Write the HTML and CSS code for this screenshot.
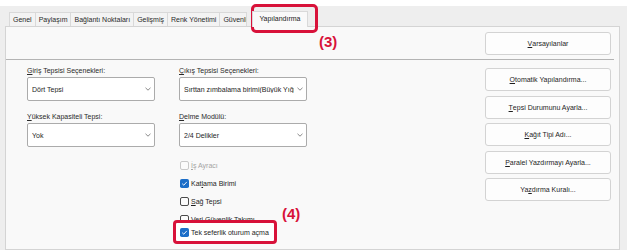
FILE: index.html
```html
<!DOCTYPE html>
<html lang="tr">
<head>
<meta charset="utf-8">
<title>Yapılandırma</title>
<link rel="stylesheet" href="styles.css">
</head>
<body>
<div class="dialog">
  <div class="tabs">
    <div class="tab">Genel</div>
    <div class="tab">Paylaşım</div>
    <div class="tab">Bağlantı Noktaları</div>
    <div class="tab">Gelişmiş</div>
    <div class="tab">Renk Yönetimi</div>
    <div class="tab tab-clipped">Güvenlik</div>
    <div class="tab tab-active">Yapılandırma</div>
  </div>
  <div class="panel">
    <div class="panel-top">
      <div class="btn"><span class="ak">V</span>arsayılanlar</div>
    </div>
    <div class="panel-body">
      <div class="col">
        <div class="field-label"><span class="ak">G</span>iriş Tepsisi Seçenekleri:</div>
        <div class="select"><span class="select-text">Dört Tepsi</span><svg class="chev" width="6" height="4" viewBox="0 0 6 4"><polyline points="0.5,0.8 3,3.2 5.5,0.8" fill="none" stroke="#6b6b6b" stroke-width="0.8"/></svg></div>
        <div class="field-label field-label-gap"><span class="ak">Y</span>üksek Kapasiteli Tepsi:</div>
        <div class="select"><span class="select-text">Yok</span><svg class="chev" width="6" height="4" viewBox="0 0 6 4"><polyline points="0.5,0.8 3,3.2 5.5,0.8" fill="none" stroke="#6b6b6b" stroke-width="0.8"/></svg></div>
      </div>
      <div class="col">
        <div class="field-label"><span class="ak">Ç</span>ıkış Tepsisi Seçenekleri:</div>
        <div class="select"><span class="select-text">Sırttan zımbalama birimi(Büyük Yığı</span><svg class="chev" width="6" height="4" viewBox="0 0 6 4"><polyline points="0.5,0.8 3,3.2 5.5,0.8" fill="none" stroke="#6b6b6b" stroke-width="0.8"/></svg></div>
        <div class="field-label field-label-gap"><span class="ak">D</span>elme Modülü:</div>
        <div class="select"><span class="select-text">2/4 Delikler</span><svg class="chev" width="6" height="4" viewBox="0 0 6 4"><polyline points="0.5,0.8 3,3.2 5.5,0.8" fill="none" stroke="#6b6b6b" stroke-width="0.8"/></svg></div>
        <div class="checks">
          <div class="check check-disabled">
            <svg class="cb" width="9" height="9" viewBox="0 0 9 9"><rect x="0.5" y="0.5" width="8" height="8" rx="1.5" fill="#fbfbfb" stroke="#c9c9c9"/></svg>
            <span><span class="ak">İ</span>ş Ayracı</span>
          </div>
          <div class="check">
            <svg class="cb" width="9" height="9" viewBox="0 0 9 9"><rect x="0" y="0" width="9" height="9" rx="1.8" fill="#1c6ec8"/><polyline points="2.2,4.7 3.8,6.2 6.8,2.9" fill="none" stroke="#ffffff" stroke-width="0.9"/></svg>
            <span>Kat<span class="ak">l</span>ama Birimi</span>
          </div>
          <div class="check">
            <svg class="cb" width="9" height="9" viewBox="0 0 9 9"><rect x="0.5" y="0.5" width="8" height="8" rx="1.5" fill="#fbfbfb" stroke="#4a4a4a"/></svg>
            <span><span class="ak">S</span>ağ Tepsi</span>
          </div>
          <div class="check">
            <svg class="cb" width="9" height="9" viewBox="0 0 9 9"><rect x="0.5" y="0.5" width="8" height="8" rx="1.5" fill="#fbfbfb" stroke="#4a4a4a"/></svg>
            <span>Veri Güvenlik Takımı</span>
          </div>
          <div class="check check-highlight">
            <svg class="cb" width="9" height="9" viewBox="0 0 9 9"><rect x="0" y="0" width="9" height="9" rx="1.8" fill="#1c6ec8"/><polyline points="2.2,4.7 3.8,6.2 6.8,2.9" fill="none" stroke="#ffffff" stroke-width="0.9"/></svg>
            <span>Tek seferlik oturum açma</span>
          </div>
        </div>
      </div>
      <div class="col col-buttons">
        <div class="btn"><span class="ak">O</span>tomatik Yapılandırma...</div>
        <div class="btn"><span class="ak">T</span>epsi Durumunu Ayarla...</div>
        <div class="btn"><span class="ak">K</span>ağıt Tipi Adı...</div>
        <div class="btn"><span class="ak">P</span>aralel Yazdırmayı Ayarla...</div>
        <div class="btn">Ya<span class="ak">z</span>dırma Kuralı...</div>
      </div>
    </div>
  </div>
</div>
<div class="mark-tab"></div>
<div class="note note-3">(3)</div>
<div class="note note-4">(4)</div>
</body>
</html>
```

FILE: styles.css
```css
* { box-sizing: border-box; }

html, body {
  margin: 0;
  padding: 0;
}

body {
  position: relative;
  width: 627px;
  height: 250px;
  overflow: hidden;
  background: #ffffff;
  font-family: "Liberation Sans", Arial, sans-serif;
  font-size: 7px;
  color: #1e1e1e;
}

.ak { text-decoration: underline; }

.dialog {
  margin-top: 6px;
  height: 244px;
  background: #eeeeee;
  padding: 0 7px 0 5px;
  display: flex;
  flex-direction: column;
  overflow: hidden;
}

.tabs {
  display: flex;
  align-items: flex-end;
  padding: 0 0 0 4px;
  height: 20px;
  flex: none;
}

.tab {
  height: 14px;
  line-height: 13px;
  padding: 0 3px;
  border: 1px solid #d9d9d9;
  border-bottom: none;
  margin-right: -1px;
  background: #f3f3f3;
  color: #2a2a2a;
  white-space: nowrap;
}

.tab-clipped {
  width: 28px;
  overflow: hidden;
}

.tab-active {
  position: relative;
  z-index: 1;
  height: 16px;
  line-height: 14px;
  margin-left: 6px;
  margin-bottom: -1px;
  padding: 0 6px;
  background: #f9f9f9;
  color: #1a1a1a;
}

.panel {
  flex: 1;
  background: #f9f9f9;
  border: 1px solid #d4d4d4;
}

.panel-top {
  height: 33px;
  margin-right: 5px;
  border-bottom: 1px solid #b4b4b4;
  display: flex;
  justify-content: flex-end;
  align-items: flex-start;
  padding: 5px 3px 0 0;
}

.btn {
  width: 126px;
  height: 23px;
  background: #fdfdfd;
  border: 1px solid #d3d3d3;
  border-radius: 3px;
  display: flex;
  align-items: center;
  justify-content: center;
  color: #1e1e1e;
  white-space: nowrap;
}

.panel-body {
  display: grid;
  grid-template-columns: 128px 128px 1fr;
  column-gap: 24px;
  padding: 6px 8px 0 21px;
}

.col {
  display: flex;
  flex-direction: column;
}

.col-buttons {
  justify-self: end;
  width: 126px;
  padding-top: 2px;
  gap: 4.5px;
}

.field-label {
  height: 10px;
  line-height: 10px;
  color: #2a2a2a;
  white-space: nowrap;
}

.field-label-gap { margin-top: 11px; }

.select {
  margin-top: 1px;
  height: 24px;
  background: #ffffff;
  border: 1px solid #ababab;
  border-radius: 2px;
  display: flex;
  align-items: center;
  padding: 0 3px 0 4px;
}

.select-text {
  flex: 1;
  min-width: 0;
  overflow: hidden;
  white-space: nowrap;
  margin-right: 3px;
}

.chev {
  flex: none;
  display: block;
}

.checks {
  margin-top: 9px;
  display: flex;
  flex-direction: column;
}

.check {
  height: 18px;
  display: flex;
  align-items: center;
  gap: 2px;
  padding-left: 1px;
  white-space: nowrap;
}

.cb { display: block; flex: none; }

.check-disabled { color: #a3a3a3; }

.check-highlight {
  position: relative;
  height: 24px;
  width: fit-content;
  margin-top: -8px;
  margin-left: -6px;
  padding: 0 5px 0 4px;
  background: #ffffff;
  border: 3px solid #d8123a;
  border-radius: 4px;
}

.mark-tab {
  position: absolute;
  left: 251px;
  top: 4px;
  width: 67px;
  height: 29px;
  border: 3px solid #d8123a;
  border-radius: 5px;
}

.note {
  position: absolute;
  font-size: 15px;
  line-height: 15px;
  font-weight: bold;
  color: #d8123a;
}

.note-3 { left: 319px; top: 34px; }
.note-4 { left: 282px; top: 206px; }
```
